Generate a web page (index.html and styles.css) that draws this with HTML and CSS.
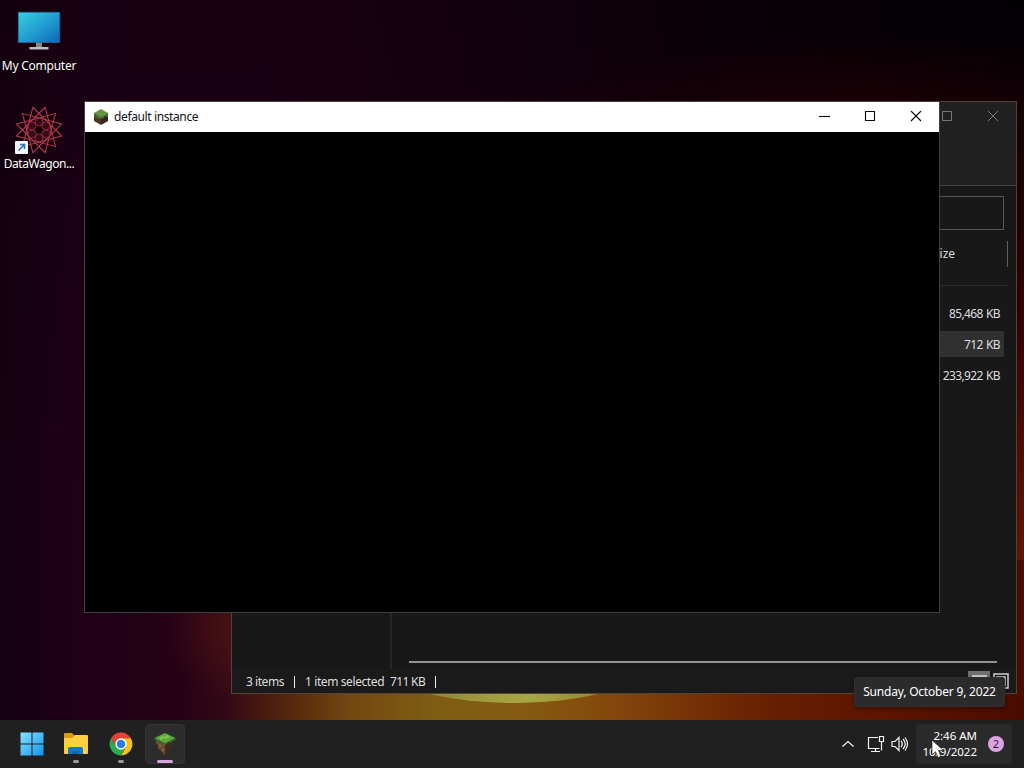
FILE: index.html
```html
<!DOCTYPE html>
<html lang="en">
<head>
<meta charset="utf-8">
<title>Desktop</title>
<link rel="stylesheet" href="styles.css">
</head>
<body>
<main class="desktop">
  <div class="sun-glow"></div>
  <div class="sun"></div>
  <div class="shortcuts">
    <div class="shortcut">
      <svg class="shortcut-icon" width="48" height="48" viewBox="0 0 48 48">
        <defs><linearGradient id="screen" x1="0" y1="0" x2="1" y2="1"><stop offset="0" stop-color="#36d0df"/><stop offset=".5" stop-color="#239fd2"/><stop offset="1" stop-color="#0c67b8"/></linearGradient></defs>
        <path fill="#86848c" d="M21 34h6v5h-6z"/><path fill="#c1bdc5" d="M14.500 39h19v2.500h-19z"/>
        <path fill="url(#screen)" stroke="#1b6d99" stroke-width=".7" d="M3.300 4.300h41.400v30.200H3.300z"/>
      </svg>
      <span class="label computer-label">My Computer</span>
    </div>
    <div class="shortcut">
      <svg class="shortcut-icon" width="48" height="48" viewBox="0 0 48 48">
        <defs>
          <path id="triangle" d="M24 .500 44.350 35.750 3.650 35.750Z"/>
          <circle id="petal" cx="24" cy="16" r="4"/>
        </defs>
        <g fill="none" stroke="#b83c4c" stroke-width="1">
          <use href="#triangle" transform="rotate(15 24 24)"/><use href="#triangle" transform="rotate(45 24 24)"/><use href="#triangle" transform="rotate(75 24 24)"/><use href="#triangle" transform="rotate(105 24 24)"/>
        </g>
        <g fill="#57152280" stroke="#a42e40" stroke-width=".9">
          <use href="#petal"/><use href="#petal" transform="rotate(60 24 24)"/><use href="#petal" transform="rotate(120 24 24)"/><use href="#petal" transform="rotate(180 24 24)"/><use href="#petal" transform="rotate(240 24 24)"/><use href="#petal" transform="rotate(300 24 24)"/>
        </g>
        <circle cx="24" cy="24" r="3.500" fill="#140006"/>
        <rect x="0" y="35" width="13" height="13" rx="1" fill="#f4f5f8"/>
        <path d="M3.500 44.500 9 39M5 38.500h4.500v4.500" fill="none" stroke="#1d79cc" stroke-width="1.600"/>
      </svg>
      <span class="label wagon-label">DataWagon...</span>
    </div>
  </div>

  <section class="explorer">
    <header class="explorer-top">
      <svg width="11" height="11" viewBox="0 0 11 11"><path d="M.5.500h9v9H.5z"/></svg>
      <svg width="11" height="11" viewBox="0 0 11 11"><path d="m0 0 10 10m0-10-10 10"/></svg>
    </header>
    <div class="search-row"><div class="search-box"></div></div>
    <div class="column-head"><span class="size-label">Size</span></div>
    <div class="files">
      <div class="file"><span>85,468 KB</span></div>
      <div class="file selected"><span>712 KB</span></div>
      <div class="file"><span>233,922 KB</span></div>
    </div>
    <div class="explorer-bottom"><div class="nav-pane"></div><div class="scroll-pane"></div></div>
    <footer class="status">
      <span class="count">3 items</span><i></i><span class="chosen">1 item selected</span><span class="total">711 KB</span><i></i>
      <svg class="views" width="42" height="22" viewBox="0 0 42 22"><path fill="#707070" d="M0 0h22v22H0z"/><path fill="#c8c8c8" d="M4 4h15v12H4z"/><g fill="none" stroke="#d0d0d0"><path stroke-width="1.500" d="M26 3h14v14H26z"/><path stroke-width="1.500" d="M28 6h9v9"/></g></svg>
    </footer>
  </section>

  <section class="game">
    <header class="game-title">
      <svg class="block" width="16" height="16" viewBox="0 0 16 16"><path fill="#503522" d="M1 4l7 4v8l-7-4z"/><path fill="#38251b" d="m8 8 7-4v8l-7 4z"/><path fill="#659541" d="m8 0 7 4-7 4-7-4z"/><path fill="#466d30" d="m1 4 7 4v2.500l-2-1.500-1 1-2-2-2-1zm7 4 7-4v3l-2 1-1-1-2 3-1-1-1 1z"/></svg>
      <h1>default instance</h1>
      <div class="controls">
        <svg width="12" height="12" viewBox="0 0 12 12"><path d="M1 5.500h11"/></svg>
        <svg width="12" height="12" viewBox="0 0 12 12"><path d="M1.500.500h9v9h-9z"/></svg>
        <svg width="12" height="12" viewBox="0 0 12 12"><path d="m1 0 10 10M11 0 1 10"/></svg>
      </div>
    </header>
  </section>

  <nav class="taskbar">
    <div class="apps">
      <div class="app"><svg width="24" height="24" viewBox="0 0 24 24"><defs><linearGradient id="win" x1="0" y1="0" x2="1" y2="1" ><stop stop-color="#83e2ff"/><stop offset="1" stop-color="#1494ee"/></linearGradient></defs><path fill="url(#win)" d="M.5.500h11v11H.5zm12 0h11v11h-11zm-12 12h11v11H.5zm12 0h11v11h-11z"/></svg></div>
      <div class="app"><svg width="26" height="24" viewBox="0 0 26 24"><path fill="#dd990d" d="M1 2q0-1 1-1h7l3 3-3 4H1z"/><path fill="#ffcf43" d="M1 6h8l3-3h12q1 0 1 1v17q0 1-1 1H2q-1 0-1-1z"/><path fill="#1679c9" d="M5 22v-5q0-2 2-2h11q2 0 2 2v5z"/><path fill="#0c66b0" d="M9 19h7v3H9z"/></svg><b></b></div>
      <div class="app"><svg width="24" height="24" viewBox="0 0 24 24"><g transform="translate(.6 .6) scale(.95)"><path fill="#e74335" d="M1.600 6A12 12 0 0 1 22.400 6H12L7 15z"/><path fill="#fbc116" d="M22.400 6A12 12 0 0 1 12 24l5.200-9L12 6z"/><path fill="#2da94f" d="M1.600 6A12 12 0 0 0 12 24l5.200-9H7z"/><circle cx="12" cy="12" r="6" fill="#fff"/><circle cx="12" cy="12" r="4.500" fill="#287de3"/></g></svg><b></b></div>
      <div class="app active"><svg width="24" height="24" viewBox="0 0 24 24"><path fill="#6d4b31" d="m3 7 9 5v11l-2-1v-3l-2 2v-3l-3-1v-4l-2-1z"/><path fill="#3b2b20" d="m12 12 9-5-1 6-2 2v4l-3-2v5l-2-2-1 3z"/><path fill="#895f3e" d="M6 12h2v3H6zm3 5h2v2H9z"/><path fill="#5ca53a" d="m1.500 6 10.500-5 10.500 5L12 11.500z"/><path fill="#7fc451" d="m6 6 3-2 2 1 3-2 3 2-4 2-2-1-3 2z"/><path fill="#366b29" d="m1.500 6 10.500 5.500L22.500 6v2l-3 1-2 2-2-1-3.500 3.500L8 10.500l-2 .5-2-2-2.500-1z"/></svg><b></b></div>
    </div>
    <div class="tray">
      <svg class="chevron" width="14" height="14" viewBox="0 0 14 14"><path d="m1.500 9.500 5.500-5 5.500 5"/></svg>
      <svg class="network" width="18" height="18" viewBox="0 0 18 18"><path d="M11 2.500H1.500v11h11M4 16.500h9M8.500 13.500v3M12.500 1.500h4v5h-4zM14.500 6.500v9"/></svg>
      <svg class="sound" width="18" height="16" viewBox="0 0 18 16"><path d="M1 5.500h3l4-4v13l-4-4H1zM10 5q2.500 3 0 6M12 3q4.500 5 0 10M14 1.500q5 6.500 0 13"/></svg>
      <div class="clock"><div class="datetime"><span class="time">2:46 AM</span><span class="date">10/9/2022</span></div><span class="notice">2</span></div>
    </div>
  </nav>
  <div class="tooltip"><span>Sunday, October 9, 2022</span></div>
  <svg class="cursor" width="14" height="20" viewBox="0 0 14 20"><path fill="#fff" stroke="#222" stroke-width=".7" d="M1 1v15l3.500-3.300 2.500 5.800 3-1.200-2.500-5.800h5z"/></svg>
</main>
</body>
</html>
```
FILE: styles.css
```css
* { box-sizing: border-box; }
body { margin: 0; overflow: hidden; font: 12px/16px "Noto Sans", "Open Sans", sans-serif; color: #f0f0f0; }
svg { display: block; flex: none; }
span { white-space: nowrap; }
.desktop {
  position: relative; width: 1024px; height: 768px; overflow: hidden;
  background:
    radial-gradient(ellipse 190px 560px at 1050px 640px, #601604 0 20%, rgba(65,0,0,.75) 60%, transparent 100%),
    radial-gradient(ellipse 360px 90px at 860px 125px, rgba(50,0,5,.55), transparent 100%),
    radial-gradient(ellipse 700px 400px at 1024px 0, #030003, transparent 100%),
    linear-gradient(180deg, rgba(12,0,10,.35), transparent 500px),
    linear-gradient(90deg, #160011, #200016 85px, #1c0013 50%, #100008);
}
.sun-glow {
  position: absolute; left: 0; top: 560px; width: 1024px; height: 160px;
  background:
    radial-gradient(ellipse 75px 75px at 240px 68px, rgba(90,24,20,.6), transparent 100%),
    linear-gradient(90deg, transparent 90px, rgba(42,3,22,.7) 185px, #320816 225px, #4f200e 275px, #744611 350px, #7e5d13 430px, #865b13 520px, #844a0c 600px, #783507 680px, #671f02 770px, #5b1400 900px, #4a0c00 1024px);
}
.sun { position: absolute; left: 355px; top: 583px; width: 318px; height: 120px; border-radius: 50%; background: linear-gradient(90deg, #8e8037 20%, #a3a040 45%, #a7a744 55%, #92812b 80%); }
.shortcuts { position: relative; display: flex; flex-direction: column; gap: 18px; padding-top: 8px; width: 78px; }
.shortcut { display: flex; flex-direction: column; align-items: center; gap: 2px; height: 80px; }
.label { line-height: 16px; color: #fff; text-shadow: 0 1px 2px #000; }
.computer-label { letter-spacing: -.25px; }
.wagon-label { letter-spacing: -.45px; }

.explorer { position: absolute; left: 231px; top: 101px; width: 786px; height: 593px; display: flex; flex-direction: column; border: 1px solid #514436; background: #181818; color: #ddd; }
.explorer-top { display: flex; justify-content: flex-end; gap: 35px; padding: 9px 17px 0 0; height: 84px; flex: none; background: #202020; border-bottom: 1px solid #454545; }
.explorer-top svg { fill: none; stroke: #777; }
.search-row { display: flex; justify-content: flex-end; height: 55px; padding: 10px 12px 11px 0; }
.search-box { width: 200px; border: 1px solid #565656; }
.column-head { display: flex; justify-content: flex-end; align-items: flex-start; height: 45px; margin-right: 8px; border-bottom: 1px solid #2a2a2a; }
.size-label { width: 75px; height: 26px; padding-top: 5px; border-right: 1px solid #606060; }
.files { display: flex; flex-direction: column; gap: 5px; padding: 14px 12px 0 0; font-size: 12px; }
.file { height: 26px; display: flex; justify-content: flex-end; align-items: center; padding: 2px 4px 0 0; letter-spacing: -.65px; word-spacing: 1px; }
.selected { background: #303030; border-radius: 2px; }
.explorer-bottom { flex: 1; display: flex; align-items: stretch; }
.nav-pane { width: 160px; border-right: 2px solid #262626; }
.scroll-pane { flex: 1; margin: 0 19px 6px 17px; border-bottom: 2px solid #929292; }
.status { height: 24px; display: flex; align-items: center; padding: 2px 0 0 14px; background: #1a1a1a; }
.status i { width: 1px; height: 12px; background: #ededed; }
.count { width: 48px; letter-spacing: -.45px; }
.chosen { margin-left: 10px; width: 85px; letter-spacing: -.4px; }
.total { width: 45px; letter-spacing: -.65px; }
.views { margin-left: auto; margin-right: 6px; }

.game { position: absolute; left: 84px; top: 101px; width: 856px; height: 512px; border: 1px solid #414141; background: #000; }
.game-title { display: flex; align-items: center; height: 30px; padding-left: 8px; background: #fff; }
.game-title h1 { margin: 0 0 0 5px; font: 12px/16px "Noto Sans", sans-serif; color: #111; letter-spacing: -.38px; }
.controls { display: flex; gap: 34px; margin-left: auto; margin-right: 17px; fill: none; stroke: #080808; stroke-width: 1.1; }

.taskbar { position: absolute; left: 0; bottom: 0; width: 1024px; height: 48px; display: flex; justify-content: space-between; background: #202020; }
.apps { display: flex; gap: 4px; padding: 4px 0 4px 12px; }
.app { position: relative; display: flex; justify-content: center; align-items: center; width: 40px; height: 40px; border-radius: 4px; margin-right: .33px; }
.active { background: #2c2c2c; border: 1px solid #343434; }
.app b { position: absolute; bottom: 1px; left: 17px; width: 6px; height: 3px; border-radius: 2px; background: #9b9b9b; }
.app.active b { left: 11px; bottom: 0; width: 16px; background: #d5a7d6; }
.tray { display: flex; align-items: center; padding: 4px 12px 4px 0; }
.tray svg { fill: none; stroke: #f2f2f2; stroke-width: 1.2; }
.network { margin-left: 12px; }
.sound { margin-left: 6px; }
.clock { display: flex; align-items: center; justify-content: flex-end; margin-left: 7px; padding-right: 8px; width: 96px; height: 40px; border-radius: 4px; background: #2a2a2a; }
.datetime { display: flex; flex-direction: column; align-items: flex-end; margin-right: 11px; font-size: 11.5px; line-height: 16px; color: #fff; }
.notice { width: 16px; height: 16px; border-radius: 50%; background: #dda2e1; color: #281d29; text-align: center; font-size: 11px; line-height: 16px; }
.tooltip { position: absolute; left: 854px; top: 677px; width: 151px; height: 30px; display: flex; align-items: center; justify-content: center; background: #2b2b2b; border: 1px solid #303030; border-radius: 3px; color: #fff; box-shadow: 0 2px 5px rgba(0,0,0,.35); letter-spacing: -.2px; }
.cursor { position: absolute; left: 931px; top: 739px; }
```
